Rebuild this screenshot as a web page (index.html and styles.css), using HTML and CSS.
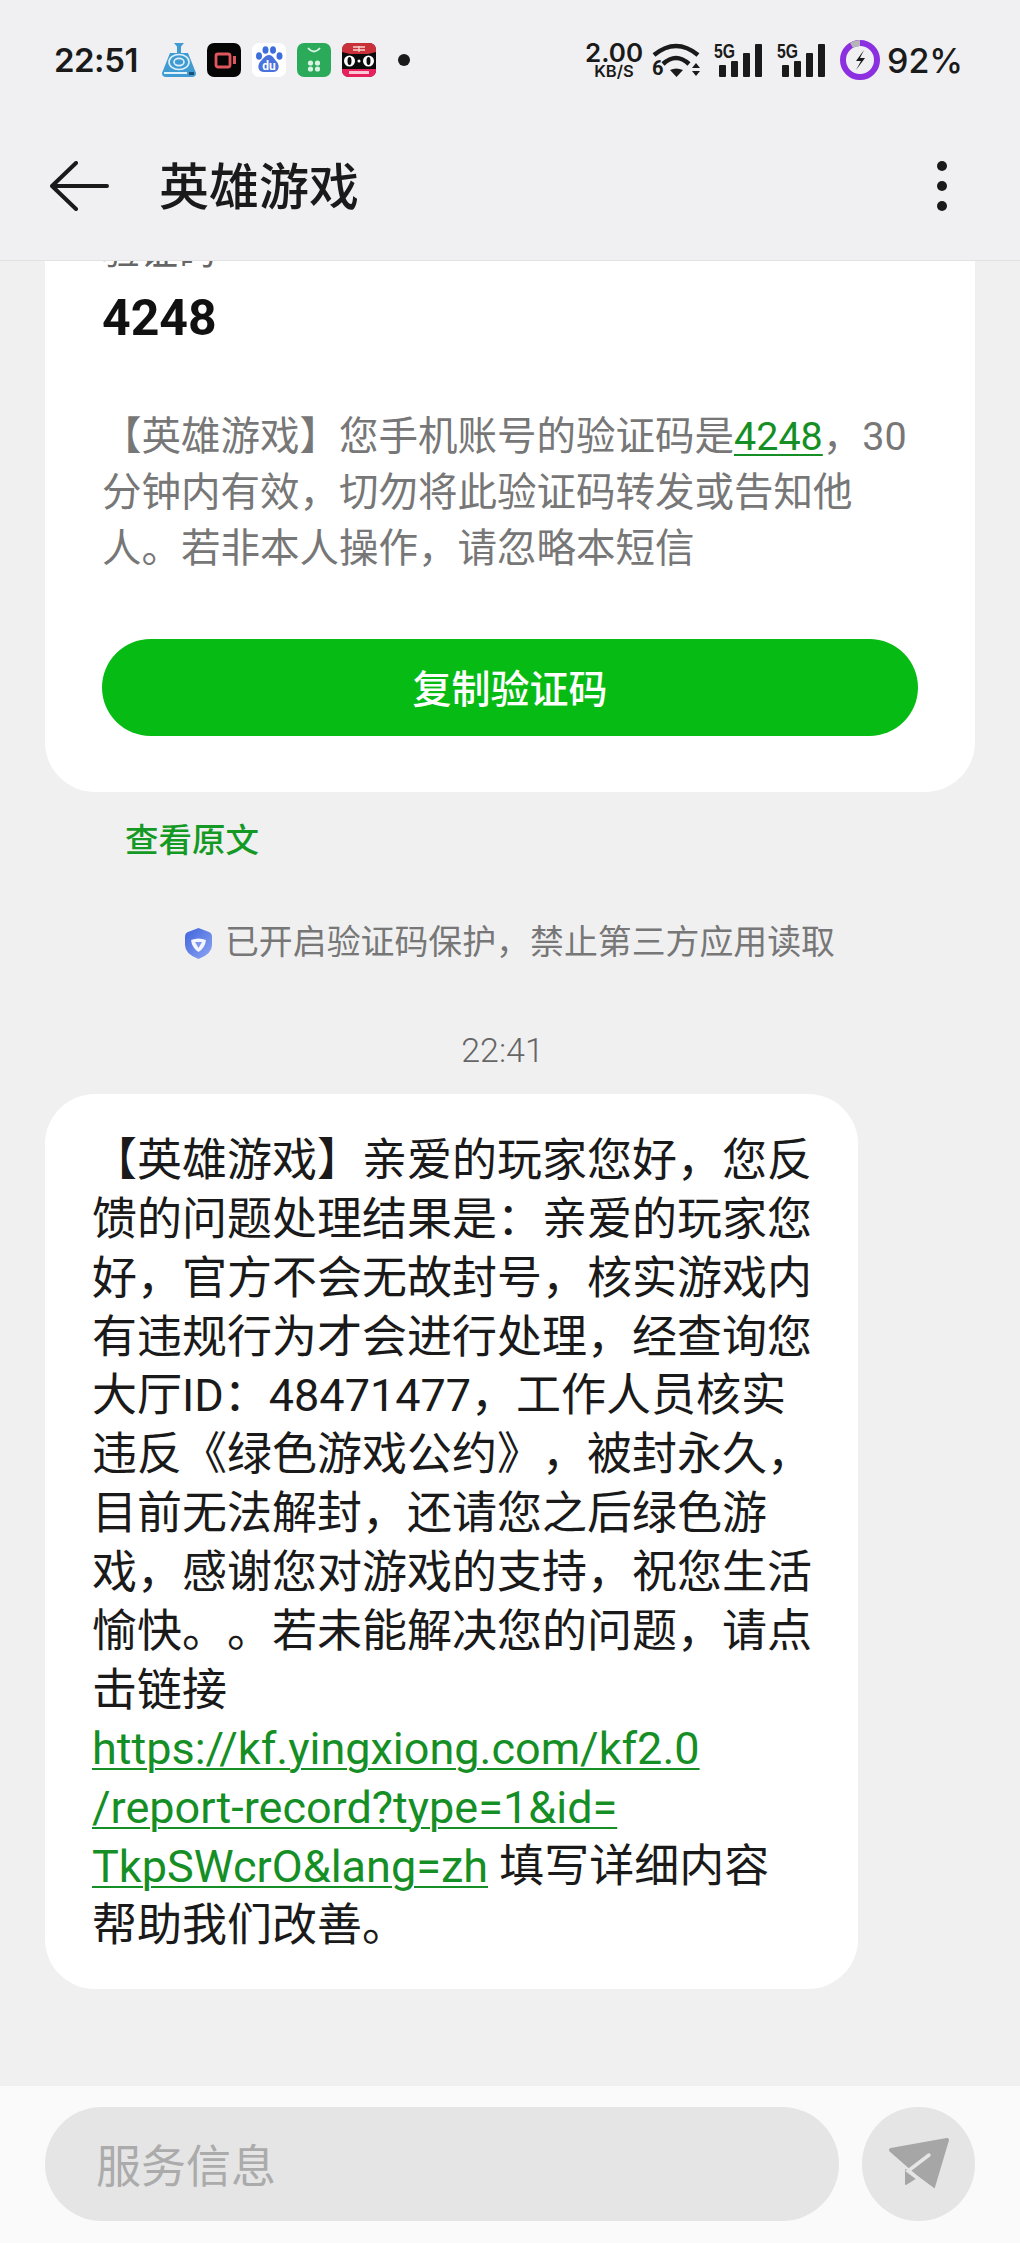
FILE: index.html
```html
<!DOCTYPE html>
<html lang="zh-CN">
<head>
<meta charset="utf-8">
<title>英雄游戏</title>
<link rel="stylesheet" href="styles.css">
</head>
<body>
<div class="screen">
  <header class="top">
    <div class="status">
      <div class="status-left">
        <span class="clock">22:51</span>
        <div class="apps">
          <svg class="app" viewBox="0 0 34 34"><path d="M8 10h18l8 20q0 4-4 4H4q-4 0-4-4z" fill="#3f9bd2"/><path d="M17 2v12" stroke="#3f9bd2" stroke-width="4"/><path d="M12 0h10l-5 6z" fill="#3f9bd2"/><ellipse cx="17" cy="19" rx="10" ry="7.500" fill="none" stroke="#dff1fb" stroke-width="1.600"/><ellipse cx="17" cy="19" rx="5" ry="3.600" fill="none" stroke="#dff1fb" stroke-width="1.600"/><rect x="2" y="29" width="23" height="2" fill="#dff1fb"/><rect x="27" y="29" width="5" height="3" fill="#1f4f74"/></svg>
          <svg class="app" viewBox="0 0 34 34"><rect width="34" height="34" rx="7" fill="#050505"/><rect x="9" y="11" width="14" height="13" rx="2" fill="none" stroke="#e0565f" stroke-width="2.800"/><rect x="26" y="13" width="3" height="8" fill="#e0565f"/></svg>
          <svg class="app" viewBox="0 0 34 34"><rect width="34" height="34" rx="7" fill="#fff"/><ellipse cx="7" cy="13" rx="3" ry="3.800" fill="#3d6fdc"/><ellipse cx="13.500" cy="7" rx="3" ry="3.800" fill="#3d6fdc"/><ellipse cx="21" cy="7" rx="3" ry="3.800" fill="#3d6fdc"/><ellipse cx="27.500" cy="13" rx="3" ry="3.800" fill="#3d6fdc"/><path d="M17 12c4 0 5 4 8 7 3 4 2 10-4 10H12c-6 0-7-6-4-10 3-3 5-7 9-7z" fill="#4a72dc"/><text x="17" y="27" class="du">du</text></svg>
          <svg class="app" viewBox="0 0 34 34"><rect width="34" height="34" rx="7" fill="#2bab5a"/><path d="M11 5q6 7 12 0" fill="none" stroke="#d9f2e2" stroke-width="1.800"/><circle cx="13.500" cy="20" r="2.600" fill="#d9f2e2"/><circle cx="20.500" cy="20" r="2.600" fill="#d9f2e2"/><circle cx="13.500" cy="26" r="2.600" fill="#d9f2e2"/><circle cx="20.500" cy="26" r="2.600" fill="#d9f2e2"/></svg>
          <svg class="app" viewBox="0 0 34 34"><rect width="34" height="34" rx="7" fill="#0b0b0b"/><path d="M0 7q0-7 7-7h20q7 0 7 7v2L26 11H8L0 9z" fill="#c9303a"/><path d="M0 26h34v1q0 7-7 7H7q-7 0-7-7z" fill="#e8215c"/><ellipse cx="7.500" cy="18" rx="5.500" ry="5.500" fill="#fff"/><ellipse cx="26.500" cy="18" rx="5.500" ry="5.500" fill="#fff"/><ellipse cx="7.500" cy="18" rx="2" ry="4" fill="#0b0b0b"/><ellipse cx="26.500" cy="18" rx="2" ry="4" fill="#0b0b0b"/><circle cx="17" cy="18" r="1.500" fill="#fff"/><path d="M11 4h12M11 7h12M17 3v6" stroke="#f6d5cc" stroke-width="1.300"/><rect x="7" y="28" width="20" height="3" fill="#f9c7d6"/></svg>
        </div>
        <span class="dot"></span>
      </div>
      <div class="status-right">
        <div class="speed"><span class="speed-num">2.00</span><span class="speed-unit">KB/S</span></div>
        <svg class="wifi" viewBox="0 0 50 36">
          <path d="M2 13Q24-5 46 13" fill="none" stroke="#1a1a1a" stroke-width="4.500"/>
          <path d="M11 22Q24 10 37 22" fill="none" stroke="#1a1a1a" stroke-width="4.500"/>
          <path d="M18 28Q24 25 31 28L24.500 35Z" fill="#1a1a1a"/>
          <path d="M44 21l4 5h-8zM44 34l4-5h-8z" fill="#1a1a1a"/>
          <text x="0" y="33" class="wifi-six">6</text>
        </svg>
        <svg class="signal" viewBox="0 0 49 35">
          <text x="1" y="15" class="five-g" textLength="21" lengthAdjust="spacingAndGlyphs">5G</text>
          <rect x="6" y="22" width="7" height="12" rx="1" fill="#1a1a1a"/>
          <rect x="18" y="18" width="7" height="16" rx="1" fill="#1a1a1a"/>
          <rect x="30" y="10" width="7" height="24" rx="1" fill="#1a1a1a"/>
          <rect x="42" y="1" width="7" height="33" rx="1" fill="#1a1a1a"/>
        </svg>
        <svg class="signal" viewBox="0 0 49 35">
          <text x="1" y="15" class="five-g" textLength="21" lengthAdjust="spacingAndGlyphs">5G</text>
          <rect x="6" y="22" width="7" height="12" rx="1" fill="#1a1a1a"/>
          <rect x="18" y="18" width="7" height="16" rx="1" fill="#1a1a1a"/>
          <rect x="30" y="10" width="7" height="24" rx="1" fill="#1a1a1a"/>
          <rect x="42" y="1" width="7" height="33" rx="1" fill="#1a1a1a"/>
        </svg>
        <svg class="ring" viewBox="0 0 40 40">
          <circle cx="20" cy="20" r="17" fill="none" stroke="#8b2fe0" stroke-width="6"/>
          <path d="M11.500 5.300A17 17 0 0 1 20 3" fill="none" stroke="#b5b5b8" stroke-width="6"/>
          <path d="M24 10l-8 11h5l-5 9 9-12h-5l4-8z" fill="#1a1a1a"/>
        </svg>
        <span class="battery">92%</span>
      </div>
    </div>
    <div class="toolbar">
      <svg class="back" viewBox="0 0 60 50"><path d="M26 2L2 25l24 23M2 25h55" fill="none" stroke="#1a1a1a" stroke-width="4" stroke-linecap="round" stroke-linejoin="round"/></svg>
      <h1 class="title">英雄游戏</h1>
      <div class="more"><span></span><span></span><span></span></div>
    </div>
  </header>

  <main class="messages">
    <section class="card">
      <div class="card-label">验证码</div>
      <div class="card-code">4248</div>
      <p class="card-body">【英雄游戏】您手机账号的验证码是<a class="link">4248</a>，30分钟内有效，切勿将此验证码转发或告知他人。若非本人操作，请忽略本短信</p>
      <button class="copy"><span class="copy-label">复制验证码</span></button>
    </section>
    <div class="view-original">查看原文</div>
    <div class="notice">
      <svg class="shield" viewBox="0 0 27 31">
        <defs><linearGradient id="sg" x1="0" y1="0" x2="1" y2="1"><stop offset="0" stop-color="#3f63dc"/><stop offset="1" stop-color="#8ea6f2"/></linearGradient></defs>
        <path d="M13.500 0L24 4q3 1 3 5v8q0 9-13.500 14Q0 26 0 17V9q0-4 3-5z" fill="url(#sg)"/>
        <path d="M6 12q7.500-3 15 0-1 8-7.500 12Q7 20 6 12z" fill="#f3f5ff"/>
        <path d="M10 14h7l-3.500 6z" fill="#7e97ee"/>
      </svg>
      <span>已开启验证码保护，禁止第三方应用读取</span>
    </div>
    <div class="time">22:41</div>
    <section class="bubble">【英雄游戏】亲爱的玩家您好，您反馈的问题处理结果是：亲爱的玩家您好，官方不会无故封号，核实游戏内有违规行为才会进行处理，经查询您大厅ID：48471477，工作人员核实违反《绿色游戏公约》，被封永久，目前无法解封，还请您之后绿色游戏，感谢您对游戏的支持，祝您生活愉快。。若未能解决您的问题，请点击链接<br><a class="link">https://kf.yingxiong.com/kf2.0<br>/report-record?type=1&amp;id=<br>TkpSWcrO&amp;lang=zh</a> 填写详细内容帮助我们改善。</section>
  </main>

  <footer class="composer">
    <div class="input">服务信息</div>
    <div class="send">
      <svg class="send-icon" viewBox="0 0 113 113">
        <path d="M85 33L29 43 71 80z" fill="#a6a6a6" stroke="#a6a6a6" stroke-width="4" stroke-linejoin="round"/>
        <path d="M44 63l0 14 11-7z" fill="#a6a6a6" stroke="#a6a6a6" stroke-width="2" stroke-linejoin="round"/>
        <path d="M67 48L46 64l27 20" fill="none" stroke="#e5e5e5" stroke-width="3.500" stroke-linecap="round"/>
      </svg>
    </div>
  </footer>
</div>
</body>
</html>
```

FILE: styles.css
```css
* { box-sizing: border-box; }
html, body { margin: 0; padding: 0; }
body {
  font-family: Roboto, "Noto Sans CJK SC", sans-serif;
  background: #f0f0f1;
  color: #1a1a1a;
  text-spacing-trim: space-all;
}
.screen {
  width: 1020px;
  height: 2243px;
  display: flex;
  flex-direction: column;
  overflow: hidden;
}
.top {
  height: 261px;
  flex: none;
  background: #f0f0f2;
  border-bottom: 1px solid #e2e2e4;
  position: relative;
  z-index: 2;
}
.status {
  height: 112px;
  padding: 40px 61px 32px 54px;
  display: flex;
  justify-content: space-between;
  align-items: center;
}
.status-left, .status-right { display: flex; align-items: center; }
.clock { font-family: Inter, sans-serif; font-size: 33px; font-weight: 600; width: 108px; letter-spacing: -0.5px; }
.apps { display: flex; gap: 11px; }
.app { width: 34px; height: 34px; display: block; }
.du { font: 700 12px Roboto, sans-serif; fill: #fff; text-anchor: middle; }
.dot { width: 12px; height: 12px; border-radius: 50%; background: #1a1a1a; margin-left: 22px; }
.speed { display: flex; flex-direction: column; align-items: center; width: 56px; margin-right: 10px; font-family: Inter, sans-serif; }
.speed-num { font-size: 26px; font-weight: 600; line-height: 22px; }
.speed-unit { font-size: 16.500px; font-weight: 600; line-height: 15px; }
.wifi { width: 50px; height: 36px; display: block; margin-right: 11px; overflow: visible; }
.wifi-six { font: 700 20px Roboto, sans-serif; fill: #1a1a1a; }
.signal { width: 49px; height: 35px; display: block; margin-right: 14px; overflow: visible; }
.five-g { font: 700 20px "Liberation Sans", sans-serif; fill: #1a1a1a; }
.ring { width: 40px; height: 40px; display: block; margin-left: 1px; margin-right: 7px; }
.battery { font-family: Inter, sans-serif; font-size: 34px; font-weight: 500; width: 72px; white-space: nowrap; }
.toolbar {
  height: 148px;
  padding: 0 50px 0 50px;
  display: flex;
  align-items: center;
}
.back { width: 60px; height: 50px; display: block; flex: none; }
.title { margin: 4px 0 0 49px; font-size: 50px; font-weight: 500; line-height: 60px; flex: 1; }
.more { display: flex; flex-direction: column; gap: 10px; margin-right: 23px; }
.more span { width: 10px; height: 10px; border-radius: 50%; background: #1a1a1a; }
.messages {
  flex: 1;
  min-height: 0;
  padding: 0 45px;
  overflow: hidden;
}
.card {
  margin-top: -65px;
  padding: 30px 57px 56px;
  background: #fff;
  border-radius: 50px;
}
.card-label { font-size: 38px; line-height: 50px; color: #666; }
.card-code { margin-top: 12px; font-size: 50px; font-weight: 700; line-height: 60px; color: #111; }
.card-body { margin: 61px 0 0; font-size: 39.500px; line-height: 56px; color: #777; }
.link { color: #158f25; text-decoration: underline; text-underline-offset: 4px; text-decoration-thickness: 2px; }
.copy {
  display: block;
  width: 100%;
  height: 97px;
  margin-top: 62px;
  padding: 0 0 3px;
  border: 0;
  border-radius: 49px;
  background: #06bb13;
  color: #fff;
  font-family: inherit;
  font-size: 39px;
  font-weight: 500;
}
.view-original {
  margin-top: 25px;
  padding-left: 80px;
  font-size: 33.500px;
  font-weight: 500;
  line-height: 48px;
  color: #149a24;
}
.notice {
  margin-top: 54px;
  display: flex;
  justify-content: center;
  align-items: center;
  gap: 13px;
  font-size: 33.900px;
  line-height: 48px;
  color: #777;
}
.shield { width: 27px; height: 31px; display: block; }
.time {
  margin-top: 63px;
  padding-right: 15px;
  text-align: center;
  font-size: 34px;
  font-weight: 300;
  line-height: 40px;
  color: #666;
}
.bubble {
  width: 813px;
  margin-top: 24px;
  padding: 38px 46px 33px 47px;
  background: #fff;
  border-radius: 50px;
  font-size: 45px;
  line-height: 58.850px;
  color: #1a1a1a;
}
.composer {
  height: 157px;
  flex: none;
  padding: 21px 45px 22px 45px;
  background: #fafafa;
  display: flex;
  gap: 23px;
}
.input {
  flex: 1;
  height: 114px;
  padding-left: 51px;
  border-radius: 57px;
  background: #e5e5e5;
  color: #ababab;
  font-size: 45px;
  line-height: 122px;
}
.send { width: 113px; height: 114px; flex: none; border-radius: 50%; background: #e5e5e5; }
.send-icon { width: 113px; height: 113px; display: block; }
```
